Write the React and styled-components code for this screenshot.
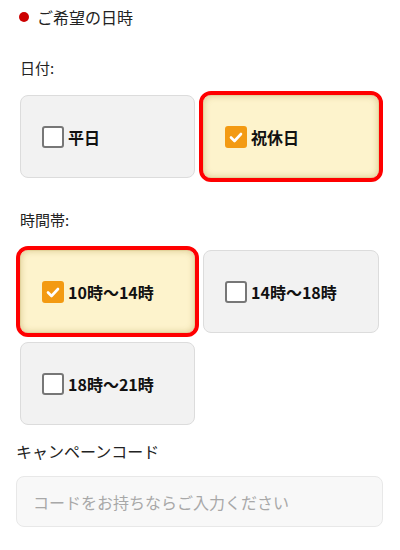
import React from "react";
import styled, { createGlobalStyle } from "styled-components";

const Global = createGlobalStyle`
  body {
    margin: 0;
    background: #fff;
    font-family: "Noto Sans CJK JP", "Noto Sans", sans-serif;
    color: #222;
  }
`;

const Page = styled.div`
  width: 400px;
  padding-top: 6px;
`;

const Heading = styled.div`
  display: flex;
  align-items: center;
  gap: 8px;
  padding-left: 19px;
  font-size: 16px;
  line-height: 22px;
  color: #222;
`;

const Dot = styled.span`
  width: 10px;
  height: 10px;
  border-radius: 50%;
  background: #cc0000;
`;

const Label = styled.div`
  padding-left: ${(p) => p.$left || 20}px;
  margin-top: ${(p) => p.$top}px;
  font-size: ${(p) => p.$size || 15}px;
  line-height: 22px;
  color: #222;
`;

const Grid = styled.div`
  display: grid;
  grid-template-columns: 175px 176px;
  column-gap: 8px;
  row-gap: 9px;
  padding: 0 21px 0 20px;
  margin-top: ${(p) => p.$top}px;
`;

const Card = styled.label`
  display: flex;
  align-items: center;
  gap: 4px;
  height: 83px;
  box-sizing: border-box;
  padding-left: 21px;
  border-radius: 8px;
  border: 1px solid ${(p) => (p.$on ? "#e2d39c" : "#dcdcdc")};
  background: ${(p) => (p.$on ? "#fdf3cc" : "#f2f2f2")};
  box-shadow: ${(p) => (p.$on ? "inset 0 0 6px rgba(160, 130, 40, 0.35)" : "none")};
  outline: ${(p) => (p.$on ? "4px solid #ff0000" : "none")};
  outline-offset: 0;
  font-size: 16px;
  font-weight: 700;
  color: #111;
  cursor: pointer;
`;

const Box = styled.span`
  display: flex;
  align-items: center;
  justify-content: center;
  width: 22px;
  height: 22px;
  box-sizing: border-box;
  border-radius: 3px;
  border: 2px solid ${(p) => (p.$on ? "#f39a12" : "#777")};
  background: ${(p) => (p.$on ? "#f39a12" : "#fff")};
`;

const Input = styled.input`
  display: block;
  margin: 14px 0 0 16px;
  width: 367px;
  height: 51px;
  box-sizing: border-box;
  padding: 0 16px;
  border: 1px solid #e8e8e8;
  border-radius: 8px;
  background: #f8f8f8;
  font-family: inherit;
  font-size: 16px;
  color: #333;
  outline: none;
  &::placeholder {
    color: #a8a8a8;
  }
`;

function Check({ on, children }) {
  return (
    <Card $on={on}>
      <Box $on={on}>
        {on && (
          <svg width="16" height="16" viewBox="0 0 16 16">
            <polyline
              points="3,8.5 6.5,12 13,5"
              fill="none"
              stroke="#fff"
              strokeWidth="2.6"
              strokeLinecap="round"
              strokeLinejoin="round"
            />
          </svg>
        )}
      </Box>
      {children}
    </Card>
  );
}

export default function App() {
  return (
    <Page>
      <Global />
      <Heading>
        <Dot />
        ご希望の日時
      </Heading>
      <Label $top={29}>日付:</Label>
      <Grid $top={16}>
        <Check>平日</Check>
        <Check on>祝休日</Check>
      </Grid>
      <Label $top={31}>時間帯:</Label>
      <Grid $top={19}>
        <Check on>10時～14時</Check>
        <Check>14時～18時</Check>
        <Check>18時～21時</Check>
      </Grid>
      <Label $top={15} $left={16} $size={16}>キャンペーンコード</Label>
      <Input placeholder="コードをお持ちならご入力ください" />
    </Page>
  );
}
